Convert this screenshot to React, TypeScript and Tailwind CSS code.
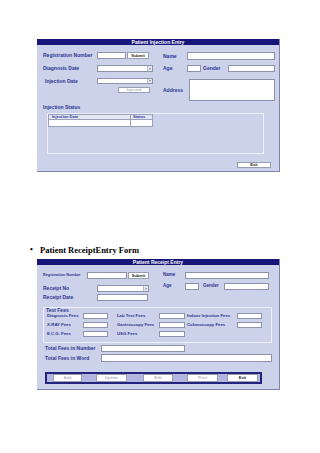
import React from 'react';

const sans = { fontFamily: '"Liberation Sans", Arial, sans-serif' };

const Box: React.FC<{ w: string; h?: string; className?: string }> = ({ w, h = 'h-full', className = '' }) => (
  <div className={`${w} ${h} bg-white border border-[#8e93ad] shrink-0 ${className}`} />
);

const Select: React.FC<{ w: string; h?: string }> = ({ w, h = 'h-full' }) => (
  <div className={`${w} ${h} bg-white border border-[#8e93ad] shrink-0 flex justify-end`}>
    <div className="w-[5px] h-full bg-[#e4e6ee] border-l border-[#b8bccc] flex items-center justify-center">
      <div className="w-0 h-0 border-l-[1.5px] border-r-[1.5px] border-t-[2px] border-l-transparent border-r-transparent border-t-[#8a8ea0]" />
    </div>
  </div>
);

const Btn: React.FC<{ w: string; h?: string; label: string; dim?: boolean; className?: string }> = ({
  w,
  h = 'h-full',
  label,
  dim,
  className = '',
}) => (
  <div
    className={`${w} ${h} shrink-0 bg-white border border-[#9a9eb4] flex items-center justify-center text-[4px] leading-none font-bold ${
      dim ? 'text-[#b4b6c2]' : 'text-[#1a1a1a]'
    } ${className}`}
  >
    {label}
  </div>
);

const Lbl: React.FC<{ w: string; size?: string; className?: string; children: React.ReactNode }> = ({
  w,
  size = 'text-[5px]',
  className = '',
  children,
}) => (
  <div className={`${w} ${size} shrink-0 leading-none font-bold text-[#2e3592] whitespace-nowrap ${className}`}>
    {children}
  </div>
);

const Title: React.FC<{ text: string }> = ({ text }) => (
  <div className="h-[6px] bg-[#16167a] flex items-center justify-center text-white text-[5px] leading-none font-bold">
    {text}
  </div>
);

const feeRows = [
  ['Diagnosis Fees', 'Lab Test Fees', 'Indoor Injection Fees'],
  ['X-RAY Fees', 'Gastroscopy Fees', 'Colonoscopy Fees'],
  ['E.C.G. Fees', 'USG Fees', ''],
];

export default function App() {
  return (
    <div className="w-[320px] h-[453px] bg-white pt-[39px] overflow-hidden" style={sans}>
      {/* Patient Injection Entry */}
      <div className="ml-[37px] w-[243px] h-[133px] flex flex-col border-r border-b border-[#7d84ad]">
        <Title text="Patient Injection Entry" />
        <div className="flex-1 bg-[#cbd2ea] pl-[6px] pt-[7px] flex flex-col">
          <div className="flex">
            <div className="w-[120px] flex flex-col">
              <div className="h-[7px] flex items-center">
                <Lbl w="w-[54px]">Registration Number</Lbl>
                <Box w="w-[29px]" />
                <Btn w="w-[22px]" label="Submit" className="ml-[1px]" />
              </div>
              <div className="h-[7px] mt-[6px] flex items-center">
                <Lbl w="w-[54px]">Diagnosis Date</Lbl>
                <Select w="w-[56px]" />
              </div>
              <div className="h-[6px] mt-[6px] flex items-center">
                <Lbl w="w-[54px]" className="pl-[2px]">Injection Date</Lbl>
                <Select w="w-[56px]" />
              </div>
              <div className="h-[6px] mt-[3px] flex">
                <Btn w="w-[32px]" label="Injected" dim className="ml-[75px]" />
              </div>
            </div>
            <div className="flex flex-col">
              <div className="h-[8px] flex items-center">
                <Lbl w="w-[24px]">Name</Lbl>
                <Box w="w-[88px]" />
              </div>
              <div className="h-[7px] mt-[5px] flex items-center">
                <Lbl w="w-[24px]">Age</Lbl>
                <Box w="w-[14px]" />
                <Lbl w="w-[25px]" className="ml-[2px]">Gender</Lbl>
                <Box w="w-[47px]" />
              </div>
              <div className="h-[22px] mt-[7px] flex items-center">
                <Lbl w="w-[26px]">Address</Lbl>
                <Box w="w-[86px]" />
              </div>
            </div>
          </div>
          <Lbl w="w-auto" className="h-[6px] mt-[3px] flex items-center">
            Injection Status
          </Lbl>
          <div className="ml-[4px] mt-[3px] w-[217px] h-[41px] border border-[#eef0f8]">
            <div className="flex w-[105px] h-[6px] border border-[#9aa0b8] bg-[#e2e5f2]">
              <div className="w-[82px] border-r border-[#9aa0b8] flex items-center pl-[3px] text-[4px] leading-none font-bold text-[#2e3592]">
                Injection Date
              </div>
              <div className="flex-1 flex items-center pl-[2px] text-[4px] leading-none font-bold text-[#2e3592]">
                Status
              </div>
            </div>
            <div className="flex w-[105px] h-[7px] bg-white border-x border-b border-[#9aa0b8]">
              <div className="w-[82px] border-r border-[#9aa0b8]" />
            </div>
          </div>
          <div className="flex justify-end pr-[8px] mt-[8px]">
            <Btn w="w-[34px]" h="h-[6px]" label="Exit" />
          </div>
        </div>
      </div>

      {/* bullet */}
      <div
        className="mt-[73px] h-[10px] flex items-center pl-[30px]"
        style={{ fontFamily: '"Liberation Serif", "Times New Roman", serif' }}
      >
        <span className="text-[8px] leading-none font-bold text-black w-[10px]">•</span>
        <span className="text-[8.5px] leading-none font-bold text-black">Patient ReceiptEntry Form</span>
      </div>

      {/* Patient Receipt Entry */}
      <div className="ml-[37px] mt-[4px] w-[243px] h-[131px] flex flex-col border-r border-b border-[#7d84ad]">
        <Title text="Patient Receipt Entry" />
        <div className="flex-1 bg-[#cbd2ea] pl-[6px] pt-[7px] flex flex-col">
          <div className="flex">
            <div className="w-[120px] flex flex-col">
              <div className="h-[7px] flex items-center">
                <Lbl w="w-[44px]" size="text-[3.8px]">Registration Number</Lbl>
                <Box w="w-[40px]" />
                <Btn w="w-[21px]" label="Submit" className="ml-[1px]" />
              </div>
              <div className="h-[7px] mt-[6px] flex items-center">
                <Lbl w="w-[54px]" size="text-[5px]">Receipt No</Lbl>
                <Select w="w-[52px]" />
              </div>
              <div className="h-[7px] mt-[2px] flex items-center">
                <Lbl w="w-[54px]" size="text-[5px]">Receipt Date</Lbl>
                <Box w="w-[51px]" />
              </div>
            </div>
            <div className="flex flex-col">
              <div className="h-[7px] flex items-center">
                <Lbl w="w-[22px]" size="text-[4.5px]">Name</Lbl>
                <Box w="w-[84px]" />
              </div>
              <div className="h-[7px] mt-[4px] flex items-center">
                <Lbl w="w-[22px]" size="text-[4.5px]">Age</Lbl>
                <Box w="w-[14px]" />
                <Lbl w="w-[21px]" size="text-[4.5px]" className="ml-[4px]">Gender</Lbl>
                <Box w="w-[45px]" />
              </div>
            </div>
          </div>

          <div className="mt-[6px] w-[229px] h-[36px] border border-[#eef0f8] flex flex-col">
            <Lbl w="w-auto" className="h-[4px] pl-[2px] flex items-center">Test Fees</Lbl>
            <div className="flex flex-col gap-[3px] mt-[1px] pl-[3px]">
              {feeRows.map((row, i) => (
                <div key={i} className="h-[6px] flex items-center">
                  <Lbl w="w-[36px]" size="text-[4.3px]">{row[0]}</Lbl>
                  <Box w="w-[25px]" />
                  <Lbl w="w-[42px]" size="text-[4.3px]" className="ml-[9px]">{row[1]}</Lbl>
                  <Box w="w-[26px]" />
                  {row[2] && (
                    <>
                      <Lbl w="w-[50px]" size="text-[4.3px]" className="ml-[2px]">{row[2]}</Lbl>
                      <Box w="w-[25px]" />
                    </>
                  )}
                </div>
              ))}
            </div>
          </div>

          <div className="h-[7px] mt-[2px] flex items-center">
            <Lbl w="w-[58px]" className="pl-[2px]">Total Fees in Number</Lbl>
            <Box w="w-[84px]" />
          </div>
          <div className="h-[8px] mt-[2px] flex items-center">
            <Lbl w="w-[58px]" className="pl-[2px]">Total Fees in Word</Lbl>
            <Box w="w-[171px]" />
          </div>

          <div className="ml-[2px] mt-[10px] w-[217px] h-[12px] border-2 border-[#24247e] bg-[#b3b6de] flex items-center">
            <Btn w="w-[29px]" h="h-[8px]" label="Add" dim className="ml-[6px]" />
            <Btn w="w-[31px]" h="h-[8px]" label="Update" dim className="ml-[14px]" />
            <Btn w="w-[30px]" h="h-[8px]" label="Edit" dim className="ml-[16px]" />
            <Btn w="w-[31px]" h="h-[8px]" label="Print" dim className="ml-[14px]" />
            <Btn w="w-[31px]" h="h-[8px]" label="Exit" className="ml-[9px]" />
          </div>
        </div>
      </div>
    </div>
  );
}
